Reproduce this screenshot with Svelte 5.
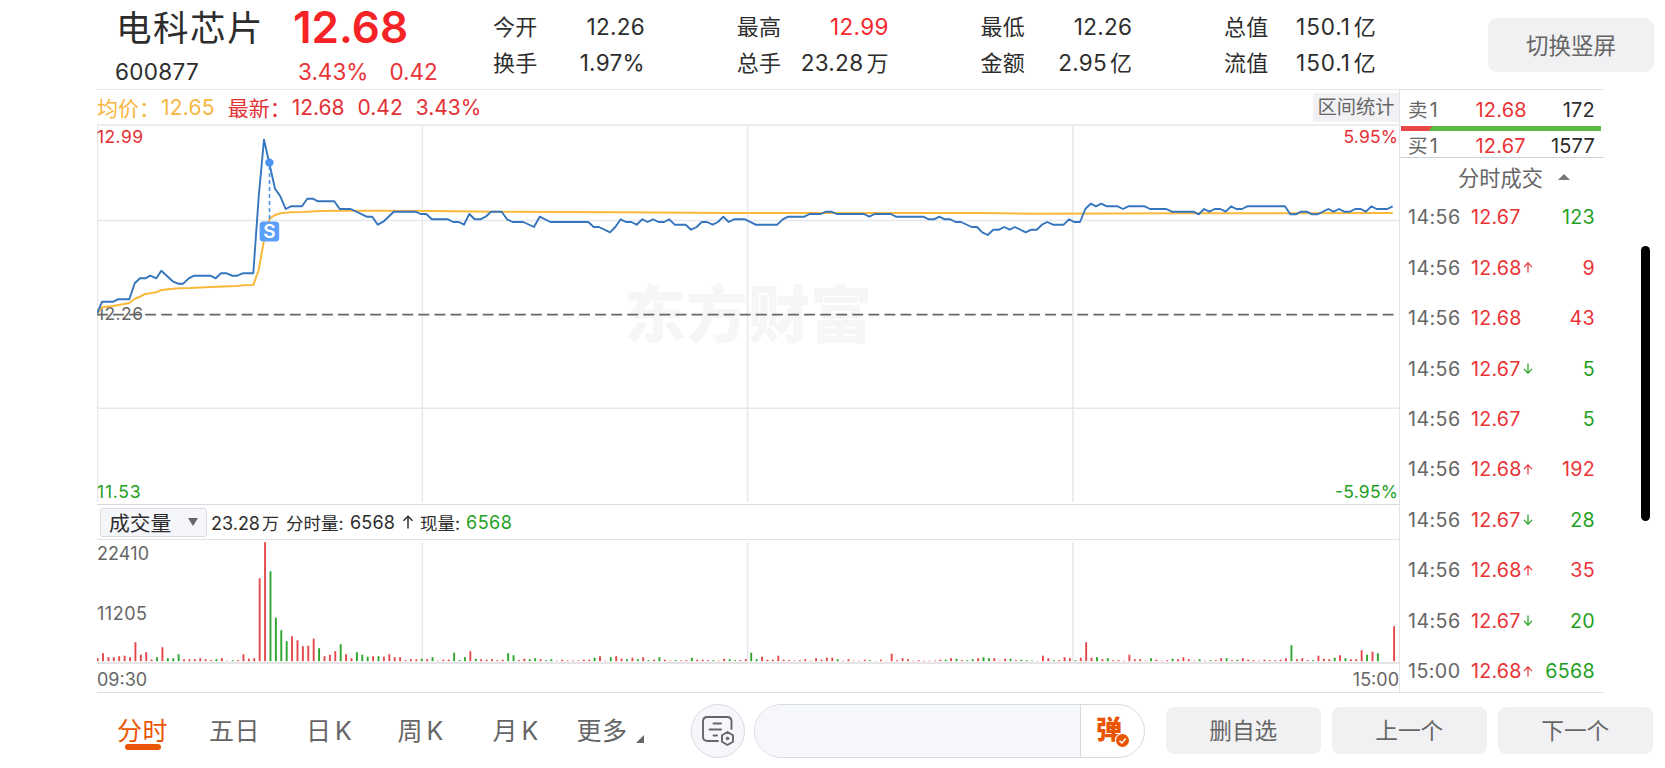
<script>
  const stats = [
    [['今开', '12.26', ''], ['换手', '1.97%', '']],
    [['最高', '12.99', '', true], ['总手', '23.28', '万']],
    [['最低', '12.26', ''], ['金额', '2.95', '亿']],
    [['总值', '150.1', '亿'], ['流值', '150.1', '亿']]
  ];

  const trades = [
    ['14:56', '12.67', '', '123', 'g'],
    ['14:56', '12.68', 'up', '9', 'r'],
    ['14:56', '12.68', '', '43', 'r'],
    ['14:56', '12.67', 'down', '5', 'g'],
    ['14:56', '12.67', '', '5', 'g'],
    ['14:56', '12.68', 'up', '192', 'r'],
    ['14:56', '12.67', 'down', '28', 'g'],
    ['14:56', '12.68', 'up', '35', 'r'],
    ['14:56', '12.67', 'down', '20', 'g'],
    ['15:00', '12.68', 'up', '6568', 'g']
  ];

  // Line segments are stored in third-pixel units, relative to an origin in page space.
  const seg = (ox, oy, s) =>
    s.trim().split(/\s+/).map((p) => {
      const [x, y] = p.split(',').map(Number);
      return (ox + x / 3).toFixed(1) + ',' + (oy + y / 3).toFixed(1);
    }).join(' ');

  const price = [
    seg(90, 120, '22,580 36,545 70,545 84,538 118,538 134,490 150,475 166,475 181,467 199,475 214,452 248,484 264,491 280,491 296,475 312,467 361,467 377,475 393,460 410,460 426,467 442,467 458,460 490,460 506,230 522,59 538,130 555,206 571,229 587,267 603,259 636,259 652,236 668,236 684,244 733,244 749,267 782,267 830,290 847,290 863,314 880,305 911,275 976,275 992,282 1009,282 1025,298'),
    seg(430, 190, '5,88 54,88 70,96 86,96 102,104 118,72 134,88 151,88 167,80 183,65 215,65 231,88 248,96 280,96 312,111 329,80 361,96 475,96 491,111 507,111 540,127 556,111 572,88 588,96 604,96 620,104 637,88 653,96 669,88 686,96 702,96 718,88 734,104 767,104 783,119 800,111 815,96 831,96 848,104 864,96 880,80 896,96 912,88 945,88 977,104 1042,104 1058,88 1075,80 1123,80 1139,72 1172,72 1188,65 1204,65 1220,72 1302,72 1318,80 1334,72'),
    seg(880, 190, '0,72 32,72 48,80 130,80 146,88 162,88 178,80 194,88 211,88 227,96 243,96 275,111 291,111 307,127 323,135 340,119 357,119 373,111 389,119 405,111 437,127 454,119 470,119 486,104 502,96 519,104 551,104 567,88 583,96 600,96 616,57 632,41 648,49 664,41 680,49 713,49 729,57 745,49 794,49 810,57 859,57 875,65 940,65 956,73 972,57 988,65 1004,57 1021,57 1037,65 1053,49 1069,57 1086,57 1102,49 1215,49 1231,73 1247,73 1263,65 1280,65 1296,73 1312,73 1345,57 1361,65 1377,57 1393,65 1410,65 1426,57 1442,57 1458,65 1474,49 1490,57 1522,57 1538,49')
  ].join(' ');

  const average = [
    seg(90, 120, '22,580 36,562 70,558 118,549 134,536 150,530 166,522 199,517 214,510 264,505 300,504 361,501 442,498 458,496 490,495 506,450 522,360 530,318 540,295 555,285 571,280 603,277 636,276 690,273 750,272 860,272'),
    seg(430, 190, '0,63 200,65 560,67 900,69 1350,69'),
    seg(880, 190, '300,69 460,71 900,70 1538,69')
  ].join(' ');

  const volumes = `r3 r8 r4 r4 r5 r5.5 r4 r19 r6.5 r9 r1.7 g4 r14 g3 g3 g7 r2 r2 r2 r3 r2 r1 g2 r3 r.5 g1 r1 r7 r2.5 r3
    r83 r119 g90 g43.5 g31 g20 r25 r21 r15 r15.5 r22.5 g13 r5 r6.5 r10 g17 r7 r3 g9 g6.5 g4.5 r5 g5 r4.5 r7 r4 r4 r1 r2 r2
    g2.5 r2 g4 r.5 r1.5 r1.5 g8.5 g1 g4 r10 g2.5 r2 r1.5 r2 r1 r1.5 g8 g6 r1 r2.5 g2 g3 r2 g1 g2 r.5 r1.5 r.7 r.7 r.7
    r1.5 r1.5 g3.5 r5 r.5 g4 r5 r2.5 g2 r3.5 g2 r4 g1 r1.5 g4 r1.5 r.5 g1 r.7 r1 g3.5 r1.5 r1.5 r1 g1 r.5 r2.5 g2 g1 r1
    r2 g8.5 g2 r4.5 r1.5 r1.5 r5.5 r1.5 r1 r.5 r1 r2 r.5 r3 r1.5 r3.5 r3.5 g2 r.5 r2 r.5 r.5 r1.5 g1 r.3 r1.5 r.3 r7.5 r1 r3
    r2 r.5 r1 r.5 r.5 r.7 r1.5 g1.5 r3 g2.5 r1 g1 g2 r3 g4 g3 r3 r.5 r2.5 g2.5 r1 g1.5 g1 g.5 r.3 r5.5 r3 g1 r1 r4
    r3 g1 r3.5 r19 r3.5 g4 r2 g3 r1 r1 r.5 r6.5 r2 r2 r.5 g3 r1.5 r.5 r1 g2.5 r2 r4 r2 r.5 g2 r.5 g1 r1 r3 g3
    r1 g1.5 r3 r1.5 r1 r.5 r1.5 r1 r1 r1.5 r3 g16 r2 r3 r1 g1 r5.5 r2.5 r2 g3.5 r6 g3 r2 r2 r11 g6.5 r9.5 g8 r0 r0 r35`
    .trim().split(/\s+/)
    .map((v, i) => ({ c: v[0], h: Number(v.slice(1)), x: 97.6 + i * 5.402 }));
</script>

<div class="app">
  <header>
    <div class="name"><b>电科芯片</b><span>600877</span></div>
    <div class="quote"><b>12.68</b><span><i>3.43%</i><i>0.42</i></span></div>
    <div class="stats">
      {#each stats as col}
        <div class="col">
          {#each col as [label, value, unit, hot]}
            <div class="stat"><span>{label}</span><span class:hot><em>{value}</em>{#if unit}<u>{unit}</u>{/if}</span></div>
          {/each}
        </div>
      {/each}
    </div>
    <button class="switch">切换竖屏</button>
  </header>

  <main>
    <section class="left">
      <div class="info">
        <span class="avg">均价：</span><span class="avg v1">12.65</span>
        <span>最新：</span><span class="v2">12.68</span><span class="v3">0.42</span><span>3.43%</span>
        <button>区间统计</button>
      </div>

      <svg class="chart" viewBox="97 124 1302 380" width="1302" height="380">
        <g class="grid">
          <path d="M97 125H1399M97 220.5H1399M97 408.3H1399M97.5 125V502M422.3 126V502M747.6 126V502M1072.8 126V502" />
        </g>
        <text class="mark" x="624" y="338" textLength="248">东方财富</text>
        <text class="lab" x="97" y="320" textLength="46" fill="#666">12.26</text>
        <path d="M97 314.7H1394" stroke="#666" stroke-width="1.8" stroke-dasharray="10.9 5.17" />
        <text class="lab" x="97" y="142.7" textLength="46" fill="#e62f33">12.99</text>
        <text class="lab" x="1343.5" y="142.7" textLength="54.5" fill="#e62f33">5.95%</text>
        <text class="lab" x="97" y="497.8" textLength="43.5" fill="#1fa11f">11.53</text>
        <text class="lab" x="1335" y="497.8" textLength="63" fill="#1fa11f">-5.95%</text>
        <polyline points={average} fill="none" stroke="#fbb93c" stroke-width="2" stroke-linejoin="round" />
        <polyline points={price} fill="none" stroke="#3575bd" stroke-width="1.9" stroke-linejoin="round" />
        <path d="M269.5 166V222" stroke="#4b92f0" stroke-width="1.6" stroke-dasharray="4 3" />
        <circle cx="269.4" cy="162.6" r="4.2" fill="#4b92f5" />
        <rect x="259.6" y="221.6" width="19.6" height="19.8" rx="3.5" fill="#5b9efb" />
        <text class="s" x="269.4" y="238.2">S</text>
      </svg>

      <div class="volbar">
        <button>成交量<svg width="10" height="8"><path d="M0 0H10L5 8Z" fill="#666" /></svg></button>
        <span class="t1">23.28<u>万</u></span><span class="t2">分时量:</span><span class="t3">6568</span>
        <svg class="t4" width="12" height="14"><path d="M6 13.5V1.2M1.4 5.8L6 1.2L10.6 5.8" fill="none" stroke="#333" stroke-width="1.5" /></svg>
        <span class="t5">现量:</span><span class="green">6568</span>
      </div>

      <svg class="chart" viewBox="97 540 1302 124" width="1302" height="124">
        <path class="grid" d="M422.3 542V661M747.6 542V661M1072.8 542V661" />
        <path d="M97 663H1399" stroke="#dcdddf" stroke-width="1.6" />
        <text class="vol" x="97" y="559.8" textLength="52">22410</text>
        <text class="vol" x="97" y="619.8" textLength="50">11205</text>
        {#each volumes as v}
          <rect x={v.x - 0.95} y={661.2 - v.h} width="1.9" height={v.h} fill={v.c === 'r' ? '#e5484a' : '#2fa52f'} />
        {/each}
      </svg>
      <div class="times"><span>09:30</span><span>15:00</span></div>
    </section>

    <aside>
      <div class="book"><span>卖<em>1</em></span><span>12.68</span><span>172</span></div>
      <svg class="ratio" width="200" height="5"><path d="M0 0H200V5H0Z" fill="#5cb944" /><path d="M0 0H31L28 5H0Z" fill="#ea4848" /></svg>
      <div class="book buy"><span>买<em>1</em></span><span>12.67</span><span>1577</span></div>
      <div class="title">分时成交<svg width="12" height="6"><path d="M0 6L6 0L12 6Z" fill="#777" /></svg></div>
      <div class="trades">
        {#each trades as [time, p, dir, vol, c]}
          <div class="trade">
            <span class="time">{time}</span>
            <span class="p">{p}</span>
            <span class="arrow">
              {#if dir}
                <svg width="10" height="11" viewBox="0 0 11 12" class={dir}><path d="M5.5 11.5V1M1 5.5L5.5 1L10 5.5" /></svg>
              {/if}
            </span>
            <span class={c}>{vol}</span>
          </div>
        {/each}
      </div>
    </aside>
    <div class="scroll"></div>
  </main>

  <footer>
    <nav>
      <span class="on">分时</span><span>五日</span><span>日<em>K</em></span><span>周<em>K</em></span><span>月<em>K</em></span>
      <span>更多</span>
      <svg class="corner" width="8" height="8"><path d="M8 0V8H0Z" fill="#666" /></svg>
    </nav>
    <div class="round">
      <svg width="34" height="32" viewBox="0 0 34 32" fill="none" stroke="#666" stroke-width="1.9" stroke-linecap="round">
        <path d="M17 26H6.500Q2 26 2 21.500V6.500Q2 2 6.500 2H26Q30.500 2 30.500 6.500V14" />
        <path d="M12.500 8.500H20M8.500 14.500H20M12.500 20.500H16" />
        <path d="M26.500 17L32 20.200V26.800L26.500 30L21 26.800V20.200Z" stroke-linejoin="round" />
        <circle cx="26.500" cy="23.500" r="1.300" fill="#666" stroke-width="1" />
      </svg>
    </div>
    <div class="input">
      <div class="field"></div>
      <div class="danmu">
        <span>弹</span>
        <svg width="15" height="15" viewBox="0 0 15 15"><circle cx="7.500" cy="7.500" r="7.500" fill="#fff" /><circle cx="7.500" cy="7.500" r="6.500" fill="#ea5504" /><path d="M4.500 7.700L6.800 10L10.700 5.500" fill="none" stroke="#fff" stroke-width="1.500" /></svg>
      </div>
    </div>
    <div class="buttons"><button>删自选</button><button>上一个</button><button>下一个</button></div>
  </footer>
</div>

<style>
  :global(body) { background: #fff; }
  .app {
    width: 1665px; height: 768px; overflow: hidden; background: #fff; color: #2d2d2d;
    font-family: Inter, "Noto Sans CJK SC", sans-serif; display: flex; flex-direction: column;
    box-sizing: border-box;
  }
  .app :is(button) { border: 0; padding: 0; font-family: inherit; color: #666; background: #f1f1f4; }
  i, em, u { font-style: normal; text-decoration: none; }
  span { white-space: nowrap; }

  header { height: 89px; display: flex; flex: none; padding-left: 115px; position: relative; }
  .name { width: 179px; }
  .name b { display: block; font-weight: 400; font-size: 35.500px; line-height: 58px; height: 56px; letter-spacing: 1.500px; margin-left: 1px; }
  .name span { display: block; font-size: 22.500px; line-height: 32px; letter-spacing: 0.300px; }
  .quote { width: 199px; color: #f52325; }
  .quote b { display: block; font-weight: 600; font-size: 44px; line-height: 55px; letter-spacing: 0; margin-left: -1px; }
  .quote span { display: flex; gap: 21px; font-size: 22.500px; line-height: 34px; margin-left: 4px; color: #ea3336; }
  .stats { width: 995px; display: flex; }
  .col { width: 152px; margin-right: 91.700px; padding-top: 10.500px; }
  .stat { display: flex; justify-content: space-between; align-items: center; height: 35.700px; font-size: 22px; }
  .stat span { line-height: 34px; height: 36px; letter-spacing: 0.300px; }
  .stat em { font-size: 22.500px; }
  .stat u { margin-left: 3px; }
  .col:last-child em { letter-spacing: 0.900px; }
  .hot { color: #f5282b; }
  .switch { width: 166px; height: 54px; margin-top: 18px; padding-bottom: 2px !important; border-radius: 9px; font-size: 22.500px; }

  main { display: flex; height: 604px; flex: none; padding-left: 97px; }
  .left { width: 1302px; border-top: 1px solid #e6e6e8; border-bottom: 1px solid #e0e0e3; box-sizing: border-box; }
  .info { height: 34px; display: flex; align-items: center; color: #e33236; font-size: 21px; position: relative; }
  .avg { color: #f7b640; }
  .v1 { margin: 0 13px 0 1px; letter-spacing: 0.200px; }
  .v2 { margin: 0 13px 0 1px; }
  .v3 { margin-right: 13px; }
  .info button { margin-left: auto; width: 86px; height: 29px; font-size: 19.300px; line-height: 29px; }
  .chart { display: block; }
  .grid, .grid path { stroke: #e6e8ed; stroke-width: 1.5; fill: none; }
  .mark { font: 900 62px "Noto Sans CJK SC", sans-serif; fill: #f6f6f6; }
  .lab { font-size: 17.500px; }
  .s { font-size: 19px; font-weight: 600; fill: #fff; text-anchor: middle; }
  .vol { font-size: 18px; fill: #666; }
  .volbar {
    height: 36px; box-sizing: border-box; display: flex; align-items: center;
    border-top: 1px solid #d8dadd; border-bottom: 1px solid #e2e3e6; font-size: 18px;
  }
  .volbar button {
    width: 107px; height: 29px; margin-left: 3px; border: 1px solid #dadce0; border-radius: 3px; background: #f5f6f9;
    color: #2d2d2d; font-size: 20.800px; display: flex; align-items: center; padding: 0 8px; justify-content: space-between;
    box-sizing: border-box;
  }
  .t1 { width: 75px; margin-left: 4px; }
  .t1 u { margin-left: 2px; font-size: 17px; }
  .t2 { width: 64px; font-size: 17.500px; }
  .t3 { width: 52px; letter-spacing: 0.200px; }
  .t4 { margin-right: 6px; }
  .t5 { width: 46px; font-size: 17.500px; }
  .green { color: #1fa11f; letter-spacing: 0.500px; }
  .times { height: 28px; display: flex; justify-content: space-between; align-items: center; font-size: 18px; color: #666; padding-top: 1px; }

  aside { width: 205px; box-sizing: border-box; border: 1px solid #e4e4e8; border-right: 0; }
  .book { height: 36px; display: grid; grid-template-columns: 67.500px 1fr auto; align-items: center; padding: 3px 9px 0 8px; box-sizing: border-box; font-size: 20px; line-height: 22px; }
  .book span { letter-spacing: 0.200px; }
  .book span:first-child { color: #666; font-size: 19.500px; }
  .book em { margin-left: 2px; }
  .book span:nth-child(2) { color: #ea3336; }
  .ratio { display: block; margin-left: 1px; }
  .buy { height: 27px; padding-top: 4px; padding-bottom: 0; border-bottom: 1.500px solid #cfd2d8; }
  .title { height: 37px; margin-bottom: 1px; display: flex; align-items: center; justify-content: center; gap: 15px; font-size: 21.200px; color: #666; padding-left: 24px; }
  .trade { height: 50.450px; display: grid; grid-template-columns: 63px 51.500px 12px 1fr; align-items: center; padding: 0 9px 0 8px; font-size: 19.700px; color: #666; position: relative; top: -4px; }
  .time { letter-spacing: 0.400px; }
  .trade .p { letter-spacing: 0.200px; }
  .trade .p, .trade .r { color: #ea3336; }
  .trade .g { color: #1fa11f; }
  .trade span:last-child { text-align: right; letter-spacing: 0.300px; }
  .arrow svg { display: block; fill: none; stroke: #ea3336; stroke-width: 1.300; }
  .arrow svg.down { transform: rotate(180deg); stroke: #1fa11f; }
  .scroll { width: 9px; height: 275px; margin: 157px 0 0 37px; border-radius: 5px; background: #000; }

  footer { height: 75px; display: flex; align-items: center; padding-left: 117px; box-sizing: border-box; }
  nav { width: 574px; flex: none; display: flex; color: #666; font-size: 25px; position: relative; line-height: 36px; }
  nav span { width: 92px; letter-spacing: 0.500px; }
  nav span:nth-child(2) { width: 97px; }
  nav span:nth-child(3) { width: 91.500px; }
  nav span:nth-child(4) { width: 95px; }
  nav span:nth-child(5) { width: 84px; }
  nav span:nth-child(6) { width: 59px; }
  nav em { margin-left: 3.500px; }
  nav .on { color: #ea5504; position: relative; }
  nav .on::after { content: ""; position: absolute; left: 8px; bottom: -1px; width: 36px; height: 6px; border-radius: 3px; background: #ea5504; }
  .corner { margin-top: 22px; }
  .round {
    width: 54px; height: 54px; flex: none; box-sizing: border-box; border: 1px solid #d9dbe2; border-radius: 50%; background: #f6f7fa;
    display: flex; align-items: center; justify-content: center;
  }
  .input { width: 391px; height: 54px; margin-left: 9px; box-sizing: border-box; border: 1px solid #d9dbe2; border-radius: 27px; display: flex; overflow: hidden; }
  .field { width: 325px; background: #f6f7fa; border-right: 1px solid #d9dbe2; }
  .danmu { position: relative; padding-left: 15px; color: #ea5504; font-size: 26px; font-weight: 900; line-height: 50px; }
  .danmu svg { position: absolute; left: 33.500px; top: 28px; }
  .buttons { display: flex; gap: 11.500px; margin-left: 21px; }
  .buttons button { width: 154.500px; height: 47px; padding-bottom: 2px; border-radius: 8px; font-size: 22.700px; }
</style>
